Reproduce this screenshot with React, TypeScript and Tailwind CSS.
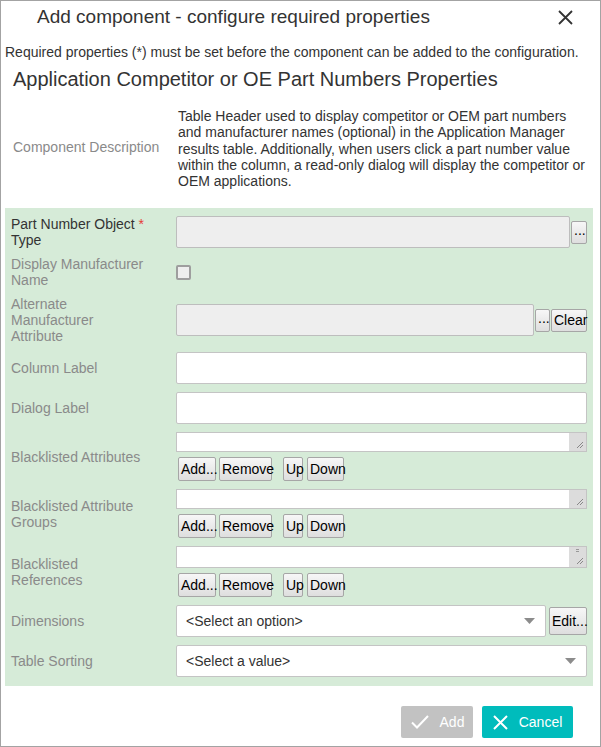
import React from "react";

const btn =
  "h-[23px] px-[2px] border border-[#a6a6a6] rounded-[2px] bg-gradient-to-b from-[#f7f7f7] to-[#dedede] text-[14px] leading-none text-black";

const Label = ({ children, dark }: { children: React.ReactNode; dark?: boolean }) => (
  <div className={`w-[165px] shrink-0 pr-[29px] text-[14px] leading-[16px] ${dark ? "text-[#333]" : "text-[#8a8a8a]"}`}>
    {children}
  </div>
);

const Caret = () => (
  <svg width="11" height="6" viewBox="0 0 11 6" className="shrink-0">
    <path d="M0 0h11L5.5 6z" fill="#8c8c8c" />
  </svg>
);

const ListField = ({ scroll }: { scroll?: boolean }) => (
  <div className="flex-1 flex flex-col gap-[5px]">
    <div className={`flex w-full bg-white border border-[#c4c4c4] ${scroll ? "h-[22px]" : "h-[20px]"}`}>
      <div className="flex-1" />
      <div className="w-[17px] bg-[#dcdcdc] relative">
        {scroll && <div className="absolute top-[2px] left-[7px] w-[3px] h-[3px] border-y border-[#999]" />}
        <svg width="8" height="8" viewBox="0 0 8 8" className="absolute right-[2px] bottom-[2px]">
          <path d="M7 1L1 7M7 4L4 7" stroke="#888" strokeWidth="1" />
        </svg>
      </div>
    </div>
    <div className="flex items-center pl-[2px]">
      <button className={`${btn} h-[24px] w-[38px]`}>Add...</button>
      <button className={`${btn} h-[24px] w-[53px] ml-[3px]`}>Remove</button>
      <button className={`${btn} h-[24px] w-[20px] ml-[11px]`}>Up</button>
      <button className={`${btn} h-[24px] w-[37px] ml-[4px]`}>Down</button>
    </div>
  </div>
);

export default function App() {
  return (
    <div className="w-[601px] h-[747px] bg-white border border-[#a3a3a3] flex flex-col font-['Liberation_Sans',Arial,sans-serif] text-[#333]">
      {/* header */}
      <div className="h-[32px] flex items-center justify-between pl-[36px] pr-[27px]">
        <span className="text-[19px]">Add component - configure required properties</span>
        <svg width="15" height="15" viewBox="0 0 15 15">
          <path d="M1 1l13 13M14 1L1 14" stroke="#333" strokeWidth="1.8" />
        </svg>
      </div>

      <p className="mt-[11px] pl-[4px] text-[14px] leading-[16px]">
        Required properties (*) must be set before the component can be added to the configuration.
      </p>
      <h2 className="mt-[7px] pl-[12px] text-[20px] leading-[24px]">
        Application Competitor or OE Part Numbers Properties
      </h2>

      {/* description */}
      <div className="mt-[17px] flex items-center">
        <div className="w-[177px] pl-[12px] text-[14px] text-[#8a8a8a] -mt-[2px]">Component Description</div>
        <p className="w-[412px] text-[14px] leading-[16.3px]">
          Table Header used to display competitor or OEM part numbers and manufacturer names (optional) in the
          Application Manager results table. Additionally, when users click a part number value within the column, a
          read-only dialog will display the competitor or OEM applications.
        </p>
      </div>

      {/* properties */}
      <div className="mt-[19px] ml-[4px] w-[588px] bg-[#d6ebd8] px-[6px] pt-[8px] pb-[9px] flex flex-col gap-[8px]">
        <div className="flex items-center">
          <Label dark>
            Part Number Object <span className="text-[#e53935]">*</span> Type
          </Label>
          <div className="flex-1 flex items-center">
            <div className="flex-1 h-[32px] bg-[#eeeeee] border border-[#bdbdbd] rounded-[2px]" />
            <button className={`${btn} w-[16px] ml-[1px] text-[10px] pb-[4px]`}>...</button>
          </div>
        </div>

        <div className="flex items-center">
          <Label>Display Manufacturer Name</Label>
          <div className="w-[15px] h-[15px] border-2 border-[#9e9e9e] rounded-[2px] bg-[#eeeeee]" />
        </div>

        <div className="flex items-center">
          <Label>Alternate Manufacturer Attribute</Label>
          <div className="flex-1 flex items-center">
            <div className="flex-1 h-[32px] bg-[#eeeeee] border border-[#bdbdbd] rounded-[2px]" />
            <button className={`${btn} w-[15px] ml-[1px] text-[10px] pb-[4px]`}>...</button>
            <button className={`${btn} w-[36px] ml-[1px]`}>Clear</button>
          </div>
        </div>

        <div className="flex items-center">
          <Label>Column Label</Label>
          <div className="flex-1 h-[32px] bg-white border border-[#c4c4c4] rounded-[2px]" />
        </div>

        <div className="flex items-center">
          <Label>Dialog Label</Label>
          <div className="flex-1 h-[32px] bg-white border border-[#c4c4c4] rounded-[2px]" />
        </div>

        <div className="flex items-center">
          <Label>Blacklisted Attributes</Label>
          <ListField />
        </div>

        <div className="flex items-center">
          <Label>Blacklisted Attribute Groups</Label>
          <ListField />
        </div>

        <div className="flex items-center">
          <Label>Blacklisted References</Label>
          <ListField scroll />
        </div>

        <div className="flex items-center">
          <Label>Dimensions</Label>
          <div className="flex-1 flex items-center">
            <div className="flex-1 h-[32px] bg-white border border-[#c4c4c4] rounded-[2px] flex items-center justify-between pl-[9px] pr-[10px] text-[14px]">
              <span>&lt;Select an option&gt;</span>
              <Caret />
            </div>
            <button className={`${btn} w-[38px] h-[28px] ml-[3px] text-[#8a8a8a]`}>Edit...</button>
          </div>
        </div>

        <div className="flex items-center">
          <Label>Table Sorting</Label>
          <div className="flex-1 h-[32px] bg-white border border-[#c4c4c4] rounded-[2px] flex items-center justify-between pl-[9px] pr-[10px] text-[14px]">
            <span>&lt;Select a value&gt;</span>
            <Caret />
          </div>
        </div>
      </div>

      {/* footer */}
      <div className="mt-[20px] flex justify-end gap-[9px] pr-[27px]">
        <button className="w-[72px] h-[32px] bg-[#c2c2c2] rounded-[2px] text-white text-[14px] flex items-center justify-center gap-[10px]">
          <svg width="20" height="16" viewBox="0 0 20 16">
            <path d="M2 8.5l5 5L18 2" stroke="white" strokeWidth="2" fill="none" />
          </svg>
          Add
        </button>
        <button className="w-[91px] h-[32px] bg-[#00bcbc] rounded-[2px] text-white text-[14px] flex items-center justify-center gap-[11px]">
          <svg width="15" height="15" viewBox="0 0 15 15">
            <path d="M1 1l13 13M14 1L1 14" stroke="white" strokeWidth="2" />
          </svg>
          Cancel
        </button>
      </div>
    </div>
  );
}
